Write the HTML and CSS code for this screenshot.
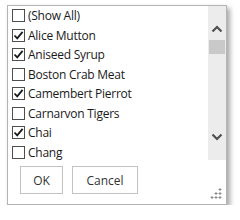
FILE: index.html
```html
<!DOCTYPE html>
<html>
<head>
<meta charset="utf-8">
<link rel="stylesheet" href="styles.css">
</head>
<body>
<div class="popup">
  <div class="top">
    <ul class="list">
      <li class="row"><span class="cb"></span><span class="label">(Show All)</span></li>
      <li class="row"><span class="cb checked"><svg viewBox="0 0 11 11"><path d="M1.5 5.5 L4.2 8.3 L9.6 1.8"/></svg></span><span class="label">Alice Mutton</span></li>
      <li class="row"><span class="cb checked"><svg viewBox="0 0 11 11"><path d="M1.5 5.5 L4.2 8.3 L9.6 1.8"/></svg></span><span class="label">Aniseed Syrup</span></li>
      <li class="row"><span class="cb"></span><span class="label">Boston Crab Meat</span></li>
      <li class="row"><span class="cb checked"><svg viewBox="0 0 11 11"><path d="M1.5 5.5 L4.2 8.3 L9.6 1.8"/></svg></span><span class="label">Camembert Pierrot</span></li>
      <li class="row"><span class="cb"></span><span class="label">Carnarvon Tigers</span></li>
      <li class="row"><span class="cb checked"><svg viewBox="0 0 11 11"><path d="M1.5 5.5 L4.2 8.3 L9.6 1.8"/></svg></span><span class="label">Chai</span></li>
      <li class="row"><span class="cb"></span><span class="label">Chang</span></li>
    </ul>
    <div class="scrollbar">
      <div class="sb-btn"><svg viewBox="0 0 12 8"><path d="M1.5 6.5 L6 2 L10.5 6.5"/></svg></div>
      <div class="thumb"></div>
      <div class="sb-track"></div>
      <div class="sb-btn"><svg viewBox="0 0 12 8"><path d="M1.5 1.5 L6 6 L10.5 1.5"/></svg></div>
    </div>
  </div>
  <div class="footer">
    <button class="btn btn-ok">OK</button>
    <button class="btn btn-cancel">Cancel</button>
    <div class="grip">
      <svg viewBox="0 0 13 13" width="13" height="13">
        <g class="plus">
          <path d="M10 0 v3 M8.5 1.5 h3"/>
          <path d="M6 4 v3 M4.5 5.5 h3"/>
          <path d="M10 4 v3 M8.5 5.5 h3"/>
          <path d="M2 8 v3 M0.5 9.5 h3"/>
          <path d="M6 8 v3 M4.5 9.5 h3"/>
          <path d="M10 8 v3 M8.5 9.5 h3"/>
        </g>
      </svg>
    </div>
  </div>
</div>
</body>
</html>
```
FILE: styles.css
```css
html, body {
  margin: 0;
  padding: 0;
  background: #ffffff;
}
body {
  font-family: "Open Sans", "Noto Sans", "Liberation Sans", sans-serif;
  font-size: 12px;
  color: #1a1a1a;
}
.popup {
  position: relative;
  margin: 5px 0 0 7px;
  width: 220px;
  height: 200px;
  box-sizing: border-box;
  border: 1px solid #b4b4b4;
  background: #ffffff;
  box-shadow: 3px 3px 5px rgba(0, 0, 0, 0.35);
  display: flex;
  flex-direction: column;
}
.top {
  display: flex;
  height: 154px;
}
.list {
  flex: 1;
  list-style: none;
  margin: 0;
  padding: 0 0 0 4px;
  overflow: visible;
}
.row {
  display: flex;
  align-items: center;
  height: 19.5px;
}
.cb {
  width: 13px;
  height: 13px;
  box-sizing: border-box;
  border: 1px solid #4d4d4d;
  background: #fff;
  flex: none;
  display: flex;
  align-items: center;
  justify-content: center;
}
.cb svg {
  width: 11px;
  height: 11px;
  fill: none;
  stroke: #1a1a1a;
  stroke-width: 1.8;
}
.label {
  margin-left: 3px;
  white-space: nowrap;
  letter-spacing: -0.25px;
}
.scrollbar {
  width: 18px;
  flex: none;
  background: #ececec;
  display: flex;
  flex-direction: column;
  padding: 14px 0;
  box-sizing: border-box;
}
.sb-btn {
  height: 18px;
  display: flex;
  align-items: center;
  justify-content: center;
}
.sb-btn svg {
  width: 12px;
  height: 8px;
  fill: none;
  stroke: #505050;
  stroke-width: 2.2;
}
.thumb {
  margin: 2px 1px 0 1px;
  height: 14px;
  background: #c9c9c9;
}
.sb-track {
  flex: 1;
}
.footer {
  flex: 1;
  display: flex;
  align-items: flex-start;
  gap: 9px;
  padding: 6px 0 0 12px;
}
.btn {
  height: 28px;
  box-sizing: border-box;
  border: 1px solid #c3c3c3;
  background: #ffffff;
  font-family: "Open Sans", "Noto Sans", "Liberation Sans", sans-serif;
  font-size: 12px;
  color: #333333;
  padding: 0;
}
.btn-ok { width: 43px; }
.btn-cancel { width: 66px; }
.grip {
  position: absolute;
  right: 3px;
  bottom: 3px;
  width: 13px;
  height: 13px;
}
.grip svg { display: block; }
.plus path {
  fill: none;
  stroke: #8c8c8c;
  stroke-width: 1;
}
```
